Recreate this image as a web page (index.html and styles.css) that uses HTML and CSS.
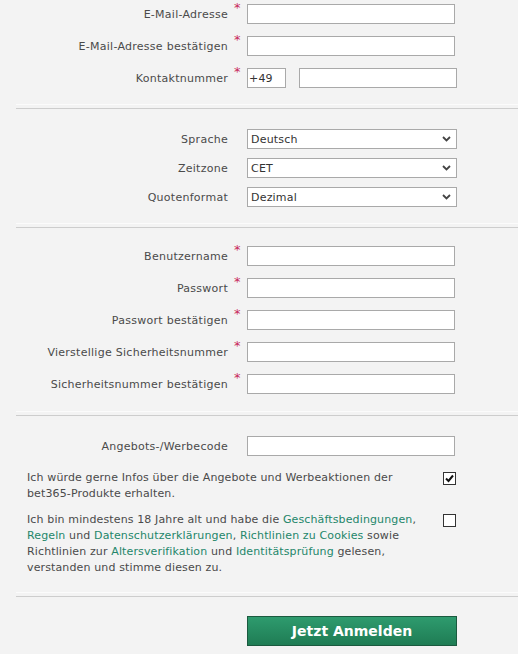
FILE: index.html
```html
<!DOCTYPE html>
<html lang="de">
<head>
  <meta charset="UTF-8">
  <meta name="viewport" content="width=device-width, initial-scale=1.0">
  <title>Registrierung</title>
  <link rel="stylesheet" href="styles.css">
</head>
<body>
  <form class="signup">
    <div class="section sec-contact">
      <div class="row">
        <label class="lbl" for="email">E-Mail-Adresse</label>
        <span class="req">*</span>
        <input class="txt" type="text" id="email">
      </div>
      <div class="row">
        <label class="lbl" for="email2">E-Mail-Adresse bestätigen</label>
        <span class="req">*</span>
        <input class="txt" type="text" id="email2">
      </div>
      <div class="row">
        <label class="lbl" for="phone">Kontaktnummer</label>
        <span class="req">*</span>
        <input class="txt prefix" type="text" value="+49">
        <input class="txt phone" type="text" id="phone">
      </div>
    </div>
    <div class="sep"></div>

    <div class="section sec-prefs">
      <div class="row">
        <label class="lbl" for="lang">Sprache</label>
        <span class="req"></span>
        <div class="sel-wrap">
          <select class="sel" id="lang"><option>Deutsch</option></select>
          <svg class="chev" width="9" height="6" viewBox="0 0 9 6"><path d="M1 1 L4.5 4.5 L8 1" fill="none" stroke="#444" stroke-width="1.8"/></svg>
        </div>
      </div>
      <div class="row">
        <label class="lbl" for="tz">Zeitzone</label>
        <span class="req"></span>
        <div class="sel-wrap">
          <select class="sel" id="tz"><option>CET</option></select>
          <svg class="chev" width="9" height="6" viewBox="0 0 9 6"><path d="M1 1 L4.5 4.5 L8 1" fill="none" stroke="#444" stroke-width="1.8"/></svg>
        </div>
      </div>
      <div class="row">
        <label class="lbl" for="odds">Quotenformat</label>
        <span class="req"></span>
        <div class="sel-wrap">
          <select class="sel" id="odds"><option>Dezimal</option></select>
          <svg class="chev" width="9" height="6" viewBox="0 0 9 6"><path d="M1 1 L4.5 4.5 L8 1" fill="none" stroke="#444" stroke-width="1.8"/></svg>
        </div>
      </div>
    </div>
    <div class="sep"></div>

    <div class="section sec-login">
      <div class="row">
        <label class="lbl" for="user">Benutzername</label>
        <span class="req">*</span>
        <input class="txt" type="text" id="user">
      </div>
      <div class="row">
        <label class="lbl" for="pw">Passwort</label>
        <span class="req">*</span>
        <input class="txt" type="password" id="pw">
      </div>
      <div class="row">
        <label class="lbl" for="pw2">Passwort bestätigen</label>
        <span class="req">*</span>
        <input class="txt" type="password" id="pw2">
      </div>
      <div class="row">
        <label class="lbl" for="pin">Vierstellige Sicherheitsnummer</label>
        <span class="req">*</span>
        <input class="txt" type="password" id="pin">
      </div>
      <div class="row">
        <label class="lbl" for="pin2">Sicherheitsnummer bestätigen</label>
        <span class="req">*</span>
        <input class="txt" type="password" id="pin2">
      </div>
    </div>
    <div class="sep"></div>

    <div class="section sec-terms">
      <div class="row">
        <label class="lbl" for="promo">Angebots-/Werbecode</label>
        <span class="req"></span>
        <input class="txt" type="text" id="promo">
      </div>
      <div class="check-row first">
        <p>Ich würde gerne Infos über die Angebote und Werbeaktionen der bet365-Produkte erhalten.</p>
        <span class="box">
          <svg width="11" height="11" viewBox="0 0 11 11"><path d="M2 5.5 L4.5 8 L9 2.5" fill="none" stroke="#111" stroke-width="2"/></svg>
        </span>
      </div>
      <div class="check-row">
        <p>Ich bin mindestens 18 Jahre alt und habe die <a href="#">Geschäftsbedingungen</a>, <a href="#">Regeln</a> und <a href="#">Datenschutzerklärungen</a>, <a href="#">Richtlinien zu Cookies</a> sowie Richtlinien zur <a href="#">Altersverifikation</a> und <a href="#">Identitätsprüfung</a> gelesen, verstanden und stimme diesen zu.</p>
        <span class="box"></span>
      </div>
    </div>
    <div class="sep"></div>

    <div class="section sec-submit">
      <button type="button" class="submit">Jetzt Anmelden</button>
    </div>
  </form>
</body>
</html>
```

FILE: styles.css
```css
body {
  margin: 0;
  padding-top: 4px;
  background-color: #f3f3f3;
  font-family: Verdana, "DejaVu Sans", sans-serif;
  font-size: 11px;
  color: #444;
}
.section {
  padding-bottom: 16px;
}
.sec-prefs {
  padding-top: 20px;
}
.sec-login {
  padding-top: 18px;
  padding-bottom: 17px;
}
.sec-terms {
  padding-top: 20px;
}
.sec-submit {
  padding-top: 19px;
  padding-left: 247px;
}
.sep {
  margin-left: 16px;
  height: 3px;
  border-top: 1px solid #fbfbfb;
  border-bottom: 1px solid #cdcdcd;
}
.row {
  display: flex;
  align-items: center;
  height: 20px;
  margin-bottom: 12px;
}
.row:last-child {
  margin-bottom: 0;
}
.sec-prefs .row {
  margin-bottom: 9px;
}
.sec-prefs .row:last-child {
  margin-bottom: 0;
}
.lbl {
  width: 228px;
  text-align: right;
  letter-spacing: 0.27px;
  color: #4a4a4a;
}
.req {
  width: 19px;
  align-self: flex-start;
  box-sizing: border-box;
  padding-left: 6px;
  margin-top: -3px;
  color: #c8285a;
  font-size: 13px;
  line-height: 13px;
}
.txt {
  box-sizing: border-box;
  width: 208px;
  height: 20px;
  margin: 0;
  padding: 1px 2px;
  border: 1px solid #a9a9a9;
  background: #fff;
  font-family: inherit;
  font-size: 11px;
  letter-spacing: 0.2px;
  color: #333;
  outline: none;
}
.prefix {
  width: 39px;
  padding: 1px 1px;
}
.phone {
  width: 158px;
  margin-left: 13px;
}
.sel-wrap {
  position: relative;
  width: 210px;
  height: 20px;
}
.sel {
  appearance: none;
  -webkit-appearance: none;
  box-sizing: border-box;
  width: 210px;
  height: 20px;
  margin: 0;
  padding: 0 3px;
  border: 1px solid #a9a9a9;
  border-radius: 0;
  background: #fff;
  font-family: inherit;
  font-size: 11px;
  letter-spacing: 0.2px;
  color: #333;
}
.chev {
  position: absolute;
  right: 6px;
  top: 7px;
  pointer-events: none;
}
.check-row {
  display: flex;
  align-items: flex-start;
  padding-left: 27px;
  margin-top: 10px;
}
.check-row.first {
  margin-top: 14px;
}
.check-row p {
  width: 400px;
  margin: 0;
  line-height: 16px;
  letter-spacing: 0.13px;
  color: #4a4a4a;
}
.check-row a {
  color: #23866a;
  text-decoration: none;
}
.box {
  box-sizing: border-box;
  display: flex;
  align-items: center;
  justify-content: center;
  width: 13px;
  height: 13px;
  margin-left: 16px;
  margin-top: 2px;
  border: 1px solid #333;
  background: #fff;
}
.submit {
  box-sizing: border-box;
  width: 210px;
  height: 30px;
  margin: 0;
  padding: 0;
  border: 1px solid #1b5a3f;
  background: linear-gradient(#2e9b6e, #1f7c54);
  color: #fff;
  font-family: inherit;
  font-size: 14px;
  font-weight: bold;
  cursor: pointer;
}
```
